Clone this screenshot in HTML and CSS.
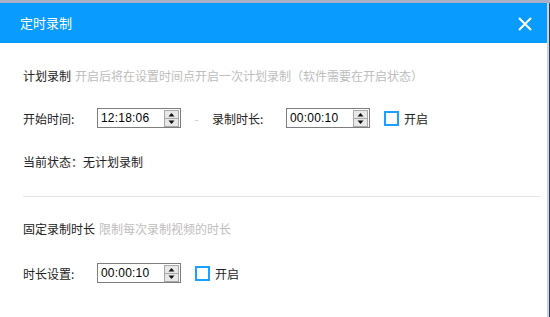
FILE: index.html
```html
<!DOCTYPE html>
<html lang="zh-CN">
<head>
<meta charset="utf-8">
<title>定时录制</title>
<link rel="stylesheet" href="styles.css">
</head>
<body>
<div class="window">
  <div class="header">
    <span class="title">定时录制</span>
    <svg class="close" width="14" height="14" viewBox="0 0 14 14"><path d="M1 1 L13 13 M13 1 L1 13" stroke="#fff" stroke-width="2" fill="none"/></svg>
  </div>
  <div class="content">
    <div class="section-title">计划录制<span class="hint">开启后将在设置时间点开启一次计划录制（软件需要在开启状态）</span></div>
    <div class="row row1">
      <span class="label">开始时间:</span>
      <div class="timebox"><span class="val">12:18:06</span><svg class="spin" width="15" height="17" viewBox="0 0 15 17"><rect x="0.5" y="0.5" width="14" height="16" fill="#e8e8e8" stroke="#a8a8a8"/><line x1="1" y1="8.5" x2="14" y2="8.5" stroke="#a8a8a8"/><path d="M7.5 3 L10.5 6.5 L4.5 6.5 Z" fill="#111"/><path d="M4.5 10.5 L10.5 10.5 L7.5 14 Z" fill="#111"/></svg></div>
      <span class="dash">-</span>
      <span class="label">录制时长:</span>
      <div class="timebox"><span class="val">00:00:10</span><svg class="spin" width="15" height="17" viewBox="0 0 15 17"><rect x="0.5" y="0.5" width="14" height="16" fill="#e8e8e8" stroke="#a8a8a8"/><line x1="1" y1="8.5" x2="14" y2="8.5" stroke="#a8a8a8"/><path d="M7.5 3 L10.5 6.5 L4.5 6.5 Z" fill="#111"/><path d="M4.5 10.5 L10.5 10.5 L7.5 14 Z" fill="#111"/></svg></div>
      <span class="check"></span><span class="check-label">开启</span>
    </div>
    <div class="status">当前状态：无计划录制</div>
    <div class="divider"></div>
    <div class="section-title title2">固定录制时长<span class="hint">限制每次录制视频的时长</span></div>
    <div class="row row2">
      <span class="label">时长设置:</span>
      <div class="timebox"><span class="val">00:00:10</span><svg class="spin" width="15" height="17" viewBox="0 0 15 17"><rect x="0.5" y="0.5" width="14" height="16" fill="#e8e8e8" stroke="#a8a8a8"/><line x1="1" y1="8.5" x2="14" y2="8.5" stroke="#a8a8a8"/><path d="M7.5 3 L10.5 6.5 L4.5 6.5 Z" fill="#111"/><path d="M4.5 10.5 L10.5 10.5 L7.5 14 Z" fill="#111"/></svg></div>
      <span class="check"></span><span class="check-label">开启</span>
    </div>
  </div>
</div>
</body>
</html>
```
FILE: styles.css
```css
html, body {
  margin: 0;
  padding: 0;
}
body {
  background: #a9b0c6;
  padding-top: 3px;
  width: 550px;
  height: 317px;
  overflow: hidden;
  font-family: "Noto Sans CJK SC", "Noto Sans", sans-serif;
  font-size: 12px;
  color: #222;
}
.window {
  width: 547px;
  height: 314px;
  background: #fff;
  box-shadow: 2px 0 0 #cfd2d8, 3px 0 0 #213f6c;
}
.header {
  height: 40px;
  background: #0a9bff;
  display: flex;
  align-items: center;
  justify-content: space-between;
  padding: 0 15px 0 20px;
}
.title {
  color: #fff;
  font-size: 13px;
  line-height: 18px;
}
.close {
  display: block;
  margin-top: 1px;
}
.content {
  padding: 0 7px 0 23px;
}
.section-title {
  margin-top: 24px;
  height: 18px;
  line-height: 18px;
  white-space: nowrap;
}
.hint {
  color: #bdbdbd;
  margin-left: 4px;
}
.row {
  display: flex;
  align-items: center;
  height: 20px;
}
.row1 {
  margin-top: 23px;
}
.label {
  width: 74px;
  flex: none;
}
.timebox {
  width: 84px;
  height: 20px;
  box-sizing: border-box;
  border: 1px solid #7d7d7d;
  display: flex;
  align-items: center;
  justify-content: space-between;
  padding: 0 1px 0 3px;
  background: #fff;
}
.val {
  font-family: "Liberation Sans", Arial, sans-serif;
  font-size: 12px;
  letter-spacing: 0.2px;
  color: #000;
}
.spin {
  display: block;
}
.dash {
  width: 31px;
  text-align: center;
  color: #c8c8c8;
  flex: none;
}
.check {
  width: 15px;
  height: 15px;
  box-sizing: border-box;
  border: 2px solid #1aa0ff;
  margin-left: 14px;
  flex: none;
}
.check-label {
  margin-left: 5px;
}
.status {
  margin-top: 25px;
  height: 18px;
  line-height: 18px;
}
.divider {
  margin-top: 25px;
  height: 1px;
  background: #e5e5e5;
}
.title2 {
  margin-top: 23px;
}
.row2 {
  margin-top: 25px;
}
```
